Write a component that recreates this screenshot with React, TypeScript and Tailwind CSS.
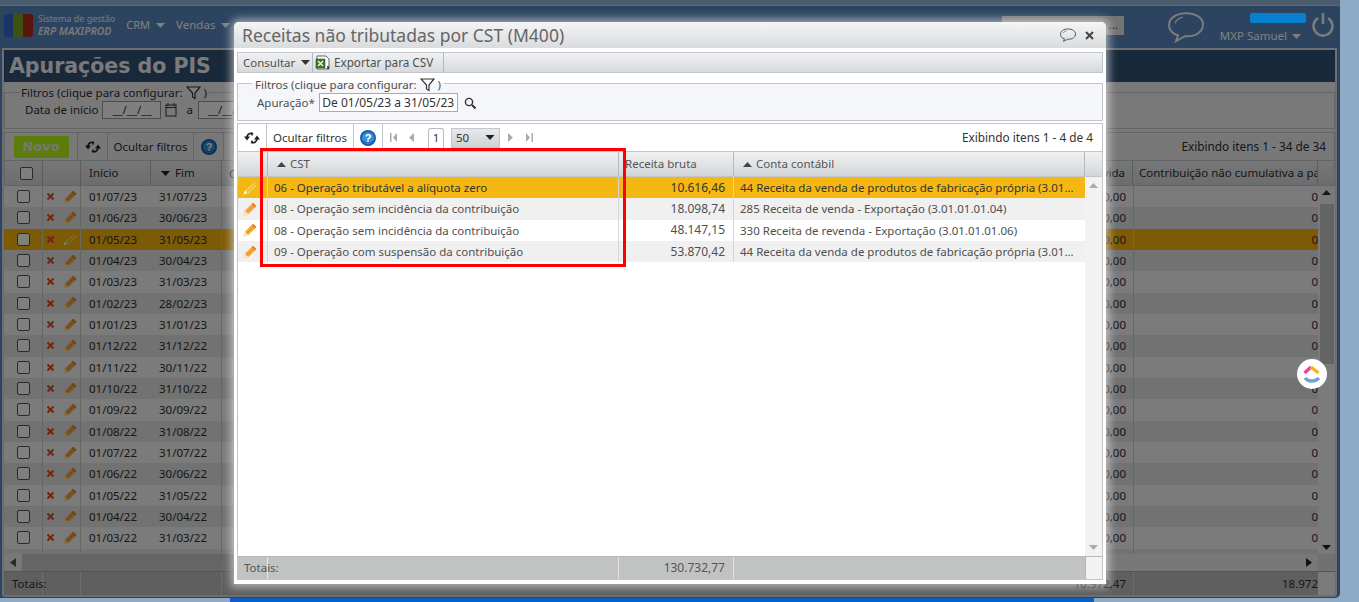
import React from "react";

const font = { fontFamily: '"Noto Sans", "DejaVu Sans", sans-serif' };

const Refresh = ({ c = "#222" }: { c?: string }) => (
  <svg width="16" height="14" viewBox="0 0 16 14" fill="none" stroke={c} strokeWidth="1.8">
    <path d="M9 3 C6 1.5 3.4 3 3 6" />
    <path d="M0 5.5 L3 9.5 L6 5.5 Z" fill={c} stroke="none" />
    <path d="M7 11 C10 12.5 12.6 11 13 8" />
    <path d="M10 8.5 L13 4.5 L16 8.5 Z" fill={c} stroke="none" />
    <path d="M8 1.5 v3 M8 9.5 v3" strokeWidth="1.4" />
  </svg>
);

const Help = () => (
  <svg width="16" height="16" viewBox="0 0 16 16">
    <circle cx="8" cy="8" r="8" fill="#155fae" />
    <circle cx="8" cy="8" r="6" fill="#3a8fd8" />
    <path d="M2.5 11 C6 13 10 13 13.5 11" stroke="#155fae" strokeWidth="1" fill="none" />
    <text x="8" y="12" textAnchor="middle" fontSize="11" fontWeight="700" fill="#fff" fontFamily="Liberation Sans">?</text>
  </svg>
);

const Funnel = () => (
  <svg width="15" height="14" viewBox="0 0 15 14" fill="none" stroke="#333" strokeWidth="1.2">
    <path d="M1 1 H14 L9 7 V12.5 L6.5 11 V7 Z" fill="#fff" />
  </svg>
);

const Pencil = ({ pale = false }: { pale?: boolean }) =>
  pale ? (
    <svg width="14" height="14" viewBox="0 0 14 14" fill="none">
      <path d="M0.5 13.5 L2 9.5 L4.5 12 Z" fill="#fff" />
      <path d="M3 10 L12 1.5 M5 12 L13 4" stroke="#fbdf8c" strokeWidth="1.4" strokeDasharray="2 1" />
    </svg>
  ) : (
    <svg width="14" height="14" viewBox="0 0 14 14">
      <path d="M0.5 13.5 L2 8.5 L10 0.8 L13.4 4 L5.5 12 Z" fill="#f5ab3c" />
      <path d="M0.5 13.5 L2 8.5 L5.5 12 Z" fill="#f8e6bd" />
      <path d="M10 0.8 L13.4 4 L12 5.4 L8.6 2.2 Z" fill="#e8802a" />
      <path d="M3.6 10.4 L10.6 3.4" stroke="#d98a24" strokeWidth="0.9" />
    </svg>
  );

const Del = () => (
  <svg width="7" height="7" viewBox="0 0 7 7" stroke="#e04a1c" strokeWidth="2">
    <path d="M0.5 0.5 L6.5 6.5 M6.5 0.5 L0.5 6.5" />
  </svg>
);

const Up = ({ c = "#444" }: { c?: string }) => (
  <svg width="9" height="5" viewBox="0 0 9 5"><path d="M0 5 L4.5 0 L9 5 Z" fill={c} /></svg>
);
const Down = ({ c = "#444", w = 9 }: { c?: string; w?: number }) => (
  <svg width={w} height="5" viewBox="0 0 9 5"><path d="M0 0 L4.5 5 L9 0 Z" fill={c} /></svg>
);

const Chat = ({ size = 36, c = "#a9b2ba", sw = 2 }: { size?: number; c?: string; sw?: number }) => (
  <svg width={size} height={size * 0.9} viewBox="0 0 36 32" fill="none" stroke={c} strokeWidth={sw}>
    <path d="M18 2 C8 2 1 7 1 14 C1 19 5 23 10 24 L8 30 L17 25 C28 26 35 20 35 13 C35 7 28 2 18 2 Z" />
    <path d="M7 12 C8 9 11 7 15 6" strokeWidth={sw * 0.7} />
  </svg>
);

const Logo = () => (
  <div className="flex h-[23px] w-[29px] shrink-0 overflow-hidden rounded-[3px]">
    <div className="w-[9px] bg-[#3267c8]" />
    <div className="w-[10px] bg-[#7fa21c]" />
    <div className="w-[10px] bg-[#b02a1c]" />
  </div>
);

const ClickUp = () => (
  <div className="absolute left-[1297px] top-[359px] z-30 flex h-[30px] w-[30px] items-center justify-center rounded-full bg-white">
    <svg width="18" height="20" viewBox="0 0 18 20" fill="none" strokeWidth="3.4">
      <path d="M1.5 9 L8 3" stroke="#f93fa4" />
      <path d="M8 3 L15.5 9" stroke="#fbb413" />
      <path d="M2 14 C5 18 12 18 16 14" stroke="#6ea3d6" />
    </svg>
  </div>
);

const dates = [
  ["01/07/23", "31/07/23"], ["01/06/23", "30/06/23"], ["01/05/23", "31/05/23"], ["01/04/23", "30/04/23"],
  ["01/03/23", "31/03/23"], ["01/02/23", "28/02/23"], ["01/01/23", "31/01/23"], ["01/12/22", "31/12/22"],
  ["01/11/22", "30/11/22"], ["01/10/22", "31/10/22"], ["01/09/22", "30/09/22"], ["01/08/22", "31/08/22"],
  ["01/07/22", "31/07/22"], ["01/06/22", "30/06/22"], ["01/05/22", "31/05/22"], ["01/04/22", "30/04/22"],
  ["01/03/22", "31/03/22"], ["", ""],
];

const modalRows = [
  { bg: "bg-[#f5b813] text-[#333]", c: ["06 - Operação tributável a alíquota zero", "10.616,46", "44 Receita da venda de produtos de fabricação própria (3.01..."] },
  { bg: "bg-[#f0f0f0]", c: ["08 - Operação sem incidência da contribuição", "18.098,74", "285 Receita de venda - Exportação (3.01.01.01.04)"] },
  { bg: "bg-white", c: ["08 - Operação sem incidência da contribuição", "48.147,15", "330 Receita de revenda - Exportação (3.01.01.01.06)"] },
  { bg: "bg-[#f0f0f0]", c: ["09 - Operação com suspensão da contribuição", "53.870,42", "44 Receita da venda de produtos de fabricação própria (3.01..."] },
];

function Background() {
  return (
    <div className="flex h-[598px] w-[1340px] flex-col rounded-br-[5px] bg-[#5a88c0] text-[11.5px] text-[#2e2e2e]">
      <div className="h-[6px] shrink-0 border-b border-[#c5d3e0] bg-[#96bad8]" />
      <div className="flex h-[42px] shrink-0 items-center pb-[4px] pl-[4px] pr-[6px]">
        <Logo />
        <div className="ml-[5px] leading-[13px] text-[#eef2f6]">
          <div className="text-[9px]">Sistema de gestão</div>
          <div className="text-[10.5px] font-semibold italic">ERP MAXIPROD</div>
        </div>
        <div className="ml-[11px] flex items-center gap-[6px] text-[11px] text-white">CRM <Down c="#fff" /></div>
        <div className="ml-[11px] flex items-center gap-[6px] text-[11.5px] text-white">Vendas <Down c="#fff" /></div>
        <div className="flex-1" />
        <div className="flex h-[19px] w-[122px] items-center justify-end bg-[#e8e8e8] pr-[6px] text-[#333]">...</div>
        <div className="ml-[44px] mt-[4px]"><Chat size={36} c="#f4f6f8" /></div>
        <div className="ml-[16px] flex flex-col items-center pt-[22px]">
          <div className="flex items-center gap-[5px] text-[11.5px] text-white">MXP Samuel <Down c="#fff" /></div>
        </div>
        <svg className="ml-[11px]" width="22" height="25" viewBox="0 0 22 25" fill="none" stroke="#f4f6f8" strokeWidth="2.6">
          <path d="M6 5 A9.5 9.5 0 1 0 16 5" />
          <path d="M11 0 V11" />
        </svg>
      </div>
      <div className="ml-[2px] mr-[3px] mb-[1px] flex min-h-0 flex-1 flex-col rounded-b-[3px] border-[2px] border-[#d8dde2] bg-[#f2f3f5]">
        <div className="flex h-[32px] shrink-0 items-center bg-[#305276] pl-[5px] text-[20.5px] font-bold text-[#f4f4f4]" style={{ fontFamily: '"DejaVu Sans", sans-serif' }}>
          Apurações do PIS
        </div>
        <fieldset className="mt-[2px] h-[45px] shrink-0 border border-[#c8c8c8] pl-[17px] pt-[1px]">
          <legend className="ml-[-2px] flex items-center gap-[3px] px-[1px] pt-[2px] text-[11.5px] leading-[14px]">
            Filtros (clique para configurar: <Funnel />)
          </legend>
          <div className="flex items-center gap-[4px]">
            <span className="ml-[3px]">Data de início</span>
            <span className="flex h-[18px] w-[59px] items-center justify-center border border-[#999] bg-white">__/__/__</span>
            <svg width="12" height="14" viewBox="0 0 12 14" fill="none" stroke="#333"><rect x="1" y="2" width="10" height="11" /><path d="M3 0 V3 M9 0 V3 M1 4.5 H11" /></svg>
            <span className="ml-[5px]">a</span>
            <span className="ml-[1px] flex h-[18px] w-[59px] items-center justify-center border border-[#999] bg-white">__/__/__</span>
          </div>
        </fieldset>
        <div className="mt-[3px] flex h-[29px] shrink-0 items-center border border-[#c8c8c8] bg-[#f0f1f2]">
          <div className="flex h-full w-[73px] items-center justify-center border-r border-[#c8c8c8]">
            <div className="flex h-[22px] w-[55px] items-center justify-center rounded-[2px] bg-[#b8f818] text-[13px] font-bold text-[#eee]" style={{ fontFamily: '"DejaVu Sans", sans-serif' }}>Novo</div>
          </div>
          <div className="flex h-full w-[30px] items-center justify-center border-r border-[#c8c8c8]"><Refresh /></div>
          <div className="flex h-full w-[86px] items-center justify-center border-r border-[#c8c8c8]">Ocultar filtros</div>
          <div className="flex h-full w-[30px] items-center justify-center border-r border-[#c8c8c8]"><Help /></div>
          <div className="flex-1" />
          <div className="pr-[8px] text-[11.8px]">Exibindo itens 1 - 34 de 34</div>
        </div>
        <div className="flex h-[25px] shrink-0 items-center border-x border-b border-[#c8c8c8] bg-gradient-to-b from-[#eceeef] to-[#d8dadc]">
          <div className="flex h-full w-[38px] shrink-0 items-center justify-center border-r border-[#b8b8b8] pl-[5px]"><div className="h-[13px] w-[13px] rounded-[2px] border border-[#555] bg-white" /></div>
          <div className="h-full w-[38px] shrink-0 border-r border-[#b8b8b8]" />
          <div className="flex h-full w-[70px] shrink-0 items-center border-r border-[#b8b8b8] pl-[8px]">Início</div>
          <div className="flex h-full w-[71px] shrink-0 items-center gap-[5px] border-r border-[#b8b8b8] pl-[10px]"><Down c="#222" />Fim</div>
          <div className="h-full flex-1 pl-[7px] leading-[25px]">C</div>
          <div className="flex h-full items-center justify-end pr-[7px]">vida</div>
          <div className="flex h-full w-[185px] shrink-0 items-center overflow-hidden whitespace-nowrap border-l border-[#b8b8b8] pl-[6px]">Contribuição não cumulativa a pa</div>
          <div className="h-full w-[17px] shrink-0 border-l border-[#b8b8b8]" />
        </div>
        <div className="flex min-h-0 flex-1 overflow-hidden bg-white">
          <div className="min-w-0 flex-1 overflow-hidden">
            {dates.map((d, i) => (
              <div key={i} className={`flex h-[21.33px] items-center ${i === 2 ? "bg-[#fbb60c]" : i % 2 ? "bg-[#e2e5e2]" : "bg-[#f6f6f6]"}`}>
                <div className="flex h-full w-[39px] shrink-0 items-center justify-center border-r border-[#ccc]">{d[0] && <div className="h-[13px] w-[13px] rounded-[2px] border border-[#555] bg-white" />}</div>
                <div className="flex h-full w-[38px] shrink-0 items-center justify-center gap-[9px] border-r border-[#ccc]">{d[0] && <><Del /><Pencil pale={i === 2} /></>}</div>
                <div className="w-[70px] shrink-0 pl-[8px]">{d[0]}</div>
                <div className="flex h-full w-[71px] shrink-0 items-center border-r border-[#ccc] pl-[8px]">{d[1]}</div>
                <div className="flex-1 pr-[7px] text-right">{d[0] && "0,00"}</div>
                <div className="flex h-full w-[185px] shrink-0 items-center justify-end border-l border-[#ccc]">{d[0] && "0"}</div>
              </div>
            ))}
          </div>
          <div className="flex w-[17px] shrink-0 flex-col items-center bg-[#f4f4f4] pt-[4px]">
            <Up c="#333" />
            <div className="mt-[9px] h-[160px] w-[14px] bg-[#c8c8c8]" />
            <div className="flex-1" />
            <div className="pb-[4px]"><Down c="#222" /></div>
          </div>
        </div>
        <div className="flex h-[17px] shrink-0 items-center bg-[#f0f0f0]">
          <div className="flex w-[18px] shrink-0 justify-center"><svg width="6" height="9" viewBox="0 0 6 9"><path d="M6 0 L0 4.5 L6 9 Z" fill="#555" /></svg></div>
          <div className="h-full w-[1000px] bg-[#cbcbcb]" />
          <div className="flex-1" />
          <svg width="6" height="9" viewBox="0 0 6 9" className="mr-[6px]"><path d="M0 0 L6 4.5 L0 9 Z" fill="#222" /></svg>
          <div className="h-full w-[17px] shrink-0 bg-[#e2e2e2]" />
        </div>
        <div className="flex h-[24px] shrink-0 items-center border-t border-[#aaa] bg-[#bebebe]">
          <div className="flex h-full w-[39px] shrink-0 items-center border-r border-[#ddd] pl-[8px]">Totais:</div>
          <div className="h-full w-[38px] shrink-0 border-r border-[#ddd]" />
          <div className="h-full w-[141px] shrink-0 border-r border-[#ddd]" />
          <div className="flex-1 pr-[7px] text-right">10.972,47</div>
          <div className="flex h-full w-[185px] shrink-0 items-center justify-end border-l border-[#ddd]">18.972</div>
          <div className="h-full w-[17px] shrink-0 bg-[#f4f4f4]" />
        </div>
      </div>
    </div>
  );
}

function Modal() {
  return (
    <div className="absolute left-[234px] top-[22px] z-20 flex h-[562px] w-[872px] flex-col rounded-t-[5px] bg-white pb-[4px] text-[11.5px] text-[#4f4f4f] shadow-[0_0_8px_3px_rgba(255,255,255,0.55)]">
      <div className="flex h-[26px] shrink-0 items-center justify-between rounded-t-[5px] bg-gradient-to-b from-[#f4f5f6] to-[#d9dbdd] pl-[8px] pr-[12px] pt-[1px]">
        <span className="text-[17.5px] text-[#666]">Receitas não tributadas por CST (M400)</span>
        <div className="flex items-center gap-[9px]">
          <Chat size={16} c="#555" sw={2.2} />
          <svg width="9" height="9" viewBox="0 0 9 9" stroke="#444" strokeWidth="2"><path d="M1 1 L8 8 M8 1 L1 8" /></svg>
        </div>
      </div>
      <div className="mx-[3px] mt-[4px] flex h-[21px] shrink-0 items-center border border-[#c2c6cb] bg-gradient-to-b from-[#f0f1f2] to-[#d7dadc]">
        <div className="flex h-full w-[75px] items-center border-r border-[#b4b8bd] pl-[5px]">Consultar <span className="ml-[6px]"><Down c="#333" /></span></div>
        <div className="flex h-full w-[131px] items-center gap-[3px] border-r border-[#b4b8bd] pl-[2px] text-[11.7px]">
          <svg width="16" height="16" viewBox="0 0 16 16">
            <path d="M2 1 H11 L14 4 V14 H2 Z" fill="#fff" stroke="#666" />
            <rect x="1" y="4" width="9" height="9" fill="#3d7a2a" stroke="#333" strokeWidth="0.5" />
            <path d="M3 6 L8 11 M8 6 L3 11" stroke="#fff" strokeWidth="1.1" />
            <path d="M13 11 v3" stroke="#222" strokeWidth="1.5" />
          </svg>
          Exportar para CSV
        </div>
      </div>
      <fieldset className="mx-[3px] mt-[2px] h-[46px] shrink-0 border border-[#c2c6cb] bg-[#f5f6f9] pl-[19px] pt-[1px]">
        <legend className="ml-[-5px] flex items-center gap-[3px] px-[3px] pt-[3px] text-[11.5px] leading-[14px]">
          Filtros (clique para configurar: <Funnel />)
        </legend>
        <div className="flex items-center">
          <span>Apuração*</span>
          <span className="ml-[4px] flex h-[19px] w-[139px] items-center justify-center border border-[#a8acb2] bg-white text-[12px] text-[#333]">De 01/05/23 a 31/05/23</span>
          <svg className="ml-[6px]" width="12" height="12" viewBox="0 0 12 12" fill="none" stroke="#333" strokeWidth="1.4"><circle cx="5" cy="5" r="3.6" /><path d="M8 8 L11.5 11.5" strokeWidth="2" /></svg>
        </div>
      </fieldset>
      <div className="mx-[3px] mt-[2px] flex min-h-0 flex-1 flex-col border border-[#c2c6cb]">
        <div className="flex h-[27px] shrink-0 items-center bg-white">
          <div className="flex h-full w-[29px] items-center justify-center border-r border-[#c2c6cb]"><Refresh /></div>
          <div className="flex h-full w-[87px] items-center justify-center border-r border-[#c2c6cb] text-[#333]">Ocultar filtros</div>
          <div className="flex h-full w-[29px] items-center justify-center border-r border-[#c2c6cb]"><Help /></div>
          <div className="ml-[7px] flex items-center gap-[12px]">
            <svg width="7" height="9" viewBox="0 0 7 9"><path d="M0 0 H1.5 V9 H0 Z M7 0 L3 4.5 L7 9 Z" fill="#aaa" /></svg>
            <svg width="5" height="9" viewBox="0 0 5 9"><path d="M5 0 L0 4.5 L5 9 Z" fill="#aaa" /></svg>
          </div>
          <div className="ml-[14px] flex h-[20px] w-[16px] items-center justify-center rounded-t-[3px] border border-b-0 border-[#bbb] text-[#333]">1</div>
          <div className="ml-[7px] flex h-[20px] w-[49px] items-center justify-between border border-[#c2c6cb] bg-gradient-to-b from-[#e8e9ea] to-[#cfd2d4] px-[4px] text-[#333]">50 <Down c="#222" w={10} /></div>
          <div className="ml-[8px] flex items-center gap-[13px]">
            <svg width="5" height="9" viewBox="0 0 5 9"><path d="M0 0 L5 4.5 L0 9 Z" fill="#aaa" /></svg>
            <svg width="7" height="9" viewBox="0 0 7 9"><path d="M0 0 L4 4.5 L0 9 Z M5.5 0 H7 V9 H5.5 Z" fill="#aaa" /></svg>
          </div>
          <div className="flex-1" />
          <div className="pr-[9px] text-[11.8px] text-[#333]">Exibindo itens 1 - 4 de 4</div>
        </div>
        <div className="flex h-[26px] shrink-0 items-center border-y border-[#c2c6cb] bg-gradient-to-b from-[#f0f1f2] to-[#d3d6d9] text-[#555]">
          <div className="h-full w-[30px] border-r border-[#b4b8bd]" />
          <div className="flex h-full w-[351px] items-center gap-[4px] border-r border-[#b4b8bd] pl-[9px]"><Up />CST</div>
          <div className="flex h-full w-[115px] items-center border-r border-[#b4b8bd] pl-[6px]">Receita bruta</div>
          <div className="flex h-full w-[351px] items-center gap-[4px] border-r border-[#b4b8bd] pl-[9px]"><Up />Conta contábil</div>
          <div className="h-full flex-1" />
        </div>
        <div className="flex min-h-0 flex-1">
          <div className="min-w-0 flex-1 bg-white">
            {modalRows.map((r, i) => (
              <div key={i} className={`flex h-[21.3px] items-center ${r.bg}`}>
                <div className="flex h-full w-[30px] items-center justify-center border-r border-[#d5d5d5] pr-[6px]"><Pencil pale={i === 0} /></div>
                <div className="flex h-full w-[351px] items-center border-r border-[#d5d5d5] pl-[6px]">{r.c[0]}</div>
                <div className="flex h-full w-[115px] items-center justify-end border-r border-[#d5d5d5] pr-[8px] text-[12px]">{r.c[1]}</div>
                <div className="flex h-full flex-1 items-center pl-[6px]">{r.c[2]}</div>
              </div>
            ))}
          </div>
          <div className="flex w-[17px] shrink-0 flex-col items-center justify-between bg-[#f2f2f2] py-[6px]">
            <Up c="#aaa" />
            <Down c="#aaa" />
          </div>
        </div>
        <div className="flex h-[23px] shrink-0 items-center border-t border-[#b4b8bd] bg-[#c1c3c3] text-[#555]">
          <div className="flex h-full w-[30px] items-center whitespace-nowrap border-r border-[#e3e3e3] pl-[6px]">Totais:</div>
          <div className="h-full w-[351px] border-r border-[#e3e3e3]" />
          <div className="flex h-full w-[115px] items-center justify-end border-r border-[#e3e3e3] pr-[8px] text-[12px]">130.732,77</div>
          <div className="h-full flex-1" />
          <div className="h-full w-[17px] border-l border-[#b4b8bd] bg-[#f2f2f2]" />
        </div>
      </div>
    </div>
  );
}

export default function App() {
  return (
    <div className="relative h-[602px] w-[1359px] overflow-hidden bg-[#8faac4]" style={font}>
      <Background />
      <div className="ml-[230px] h-[4px] w-[864px] bg-[#0b5fc0]" />
      <div className="absolute left-0 top-0 z-10 h-[598px] w-[1340px] rounded-br-[5px] bg-black/50" />
      <div className="absolute left-[1250px] top-[13px] z-20 h-[10px] w-[56px] rounded-[2px] bg-[#0880d0]" />
      <Modal />
      <div className="absolute left-[260px] top-[148px] z-30 h-[119px] w-[366px] border-[3px] border-[#fe0000]" />
      <ClickUp />
    </div>
  );
}
